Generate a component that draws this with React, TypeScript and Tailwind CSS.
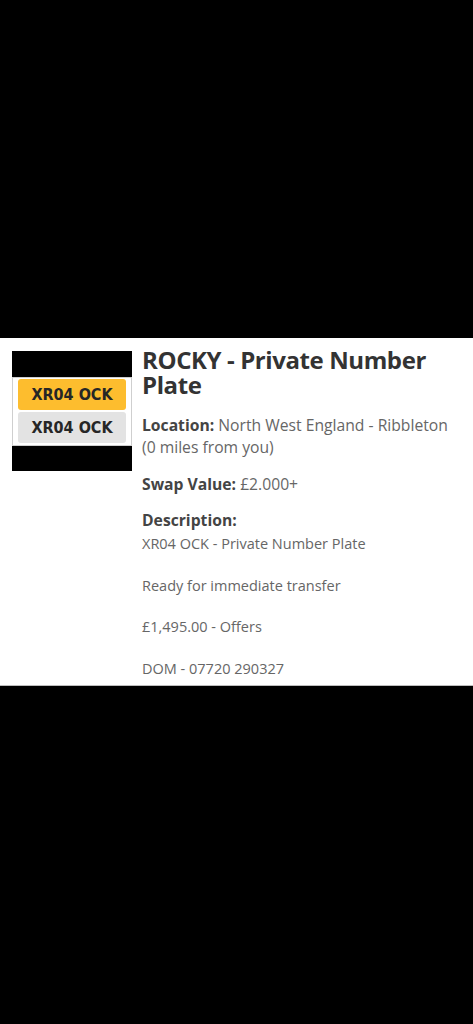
const Plate = ({ bg }: { bg: string }) => (
  <div
    className={`${bg} mx-[5px] h-[31px] rounded-[3px] flex items-center justify-center text-[16px] font-bold text-[#262626] [font-family:'DejaVu_Sans_Condensed','DejaVu_Sans',sans-serif]`}
  >
    XR04 OCK
  </div>
);

const PlateImage = () => (
  <div className="w-[120px] h-[120px] shrink-0 bg-black flex flex-col justify-center">
    <div className="bg-white border border-[#cfcfcf] h-[69px] flex flex-col justify-center gap-[2px]">
      <Plate bg="bg-[#fdbd2e]" />
      <Plate bg="bg-[#e3e3e3]" />
    </div>
  </div>
);

export default function App() {
  return (
    <div className="h-screen bg-black flex items-center [font-family:'Open_Sans',sans-serif]">
      <div className="w-full bg-white border-b border-[#bdbdbd] flex gap-[10px] pl-[12px] pr-2 pt-[13px] pb-[6px]">
        <PlateImage />
        <div className="flex-1 min-w-0">
          <h1 className="text-[24px] leading-[25px] font-bold text-[#333] tracking-[-0.4px] -mt-[4px]">
            ROCKY - Private Number Plate
          </h1>
          <div className="mt-[17px] text-[15.7px] leading-[22px] text-[#666]">
            <p>
              <span className="font-bold text-[#444]">Location:</span> North West England - Ribbleton{" "}
              <span className="whitespace-nowrap">(0 miles from you)</span>
            </p>
            <p className="mt-[15px]">
              <span className="font-bold text-[#444]">Swap Value:</span> £2.000+
            </p>
            <p className="mt-[14px] font-bold text-[#444]">Description:</p>
            <div className="text-[14.5px] leading-[20.5px] mt-[3px]">
              <p>XR04 OCK - Private Number Plate</p>
              <p className="mt-[21px]">Ready for immediate transfer</p>
              <p className="mt-[21px]">£1,495.00 - Offers</p>
              <p className="mt-[21px]">DOM - 07720 290327</p>
            </div>
          </div>
        </div>
      </div>
    </div>
  );
}
